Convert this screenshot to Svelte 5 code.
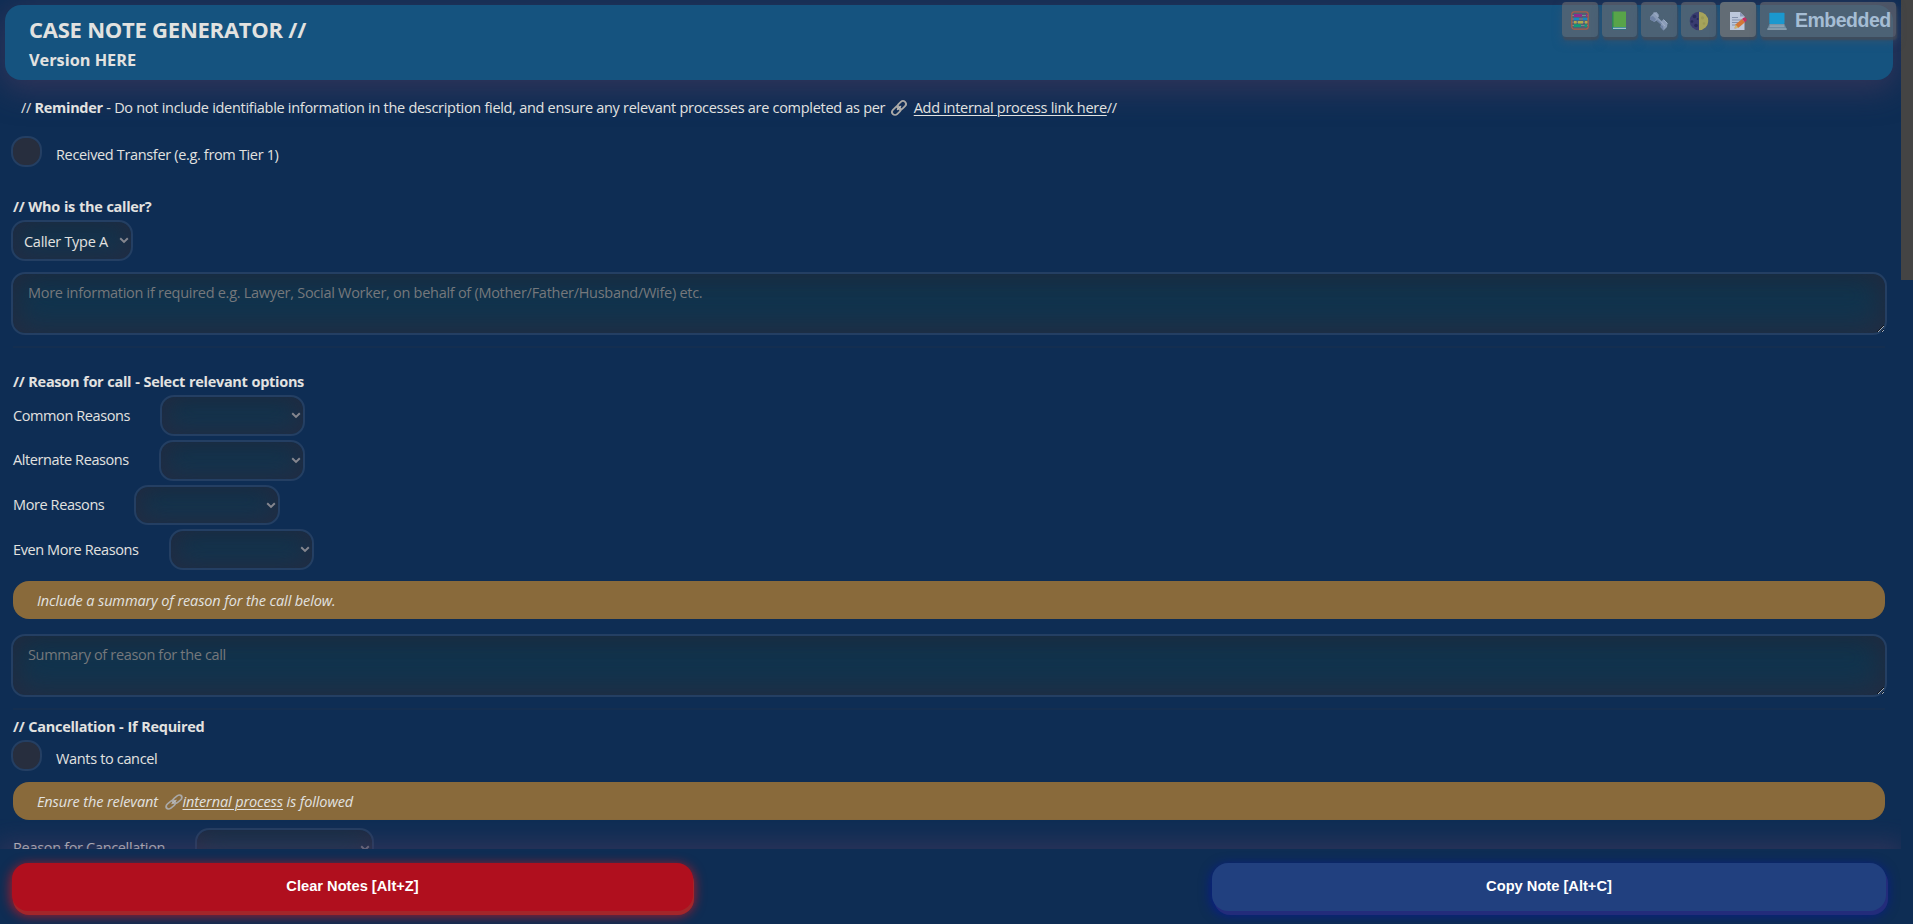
<script>
  const reasons = [
    { label: 'Common Reasons', width: 145, height: 41, cls: 'r1' },
    { label: 'Alternate Reasons', width: 146, height: 41, cls: 'r2' },
    { label: 'More Reasons', width: 146, height: 40, cls: 'r3' },
    { label: 'Even More Reasons', width: 145, height: 41, cls: 'r4' }
  ];
</script>

{#snippet chevron()}
  <svg class="chev" width="10" height="7" viewBox="0 0 10 7"><path d="M1.2 1.3 5 4.9 8.8 1.3" fill="none" stroke="#85868f" stroke-width="2" /></svg>
{/snippet}

{#snippet link()}
  <svg class="link" width="16" height="16" viewBox="0 0 16 16" fill="none" stroke-linecap="round">
    <g transform="rotate(-45 8 8)">
      <rect x="-0.6" y="5" width="9.6" height="6" rx="3" stroke="#aaa9a7" stroke-width="1.8" />
      <rect x="7" y="5" width="9.6" height="6" rx="3" stroke="#aaa9a7" stroke-width="1.8" />
      <path d="M5.6 8h5" stroke="#c0bfbd" stroke-width="1" />
    </g>
  </svg>
{/snippet}

<div class="app">
  <div class="page">
    <div class="scroll">
      <header>
        <h1>CASE NOTE GENERATOR //</h1>
        <h2>Version HERE</h2>
      </header>

      <main>
        <p class="reminder">// <b>Reminder</b> - Do not include identifiable information in the description field, and ensure any relevant processes are completed as per {@render link()}<a href="#top">Add internal process link here</a>//</p>

        <label class="check first"><input type="checkbox" /><span>Received Transfer (e.g. from Tier 1)</span></label>

        <h3 class="caller">// Who is the caller?</h3>
        <div class="select type">
          <select><option>Caller Type A</option></select>
          {@render chevron()}
        </div>
        <textarea class="t1" placeholder="More information if required e.g. Lawyer, Social Worker, on behalf of (Mother/Father/Husband/Wife) etc."></textarea>
        <hr />

        <h3 class="reason">// Reason for call - Select relevant options</h3>
        {#each reasons as r}
          <div class="row {r.cls}">
            <span>{r.label}</span>
            <div class="select" style="width:{r.width}px;height:{r.height}px">
              <select></select>
              {@render chevron()}
            </div>
          </div>
        {/each}

        <p class="note n1">Include a summary of reason for the call below.</p>
        <textarea class="t2" placeholder="Summary of reason for the call"></textarea>
        <hr />

        <h3 class="cancel">// Cancellation - If Required</h3>
        <label class="check second"><input type="checkbox" /><span>Wants to cancel</span></label>
        <p class="note n2">Ensure the relevant {@render link()}<a href="#top">internal process</a> is followed</p>
        <div class="row why">
          <span>Reason for Cancellation</span>
          <div class="select" style="width:179px;height:41px">
            <select></select>
            {@render chevron()}
          </div>
        </div>
      </main>
    </div>

    <footer>
      <button class="clear">Clear Notes [Alt+Z]</button>
      <button class="copy">Copy Note [Alt+C]</button>
    </footer>
  </div>

  <div class="track"><div class="thumb"></div></div>

  <nav class="tools">
    <button aria-label="Abacus">
      <svg width="18" height="19" viewBox="0 0 18 19">
        <path d="M1 4.5h16M1 8h16M1 11.2h16M1 14.5h16" stroke="#7b8590" stroke-width="1" />
        <path d="M3 4.5h8M15 4.5h1.5" stroke="#902b8c" stroke-width="2.8" />
        <path d="M3 8h5M12 8h4" stroke="#1486c4" stroke-width="2.6" />
        <path d="M3 11.2h2.6M7 11.2h5M14 11.2h2.5" stroke="#b3aa4a" stroke-width="2.4" />
        <path d="M3 14.6h7M13.5 14.6h2.5" stroke="#109a78" stroke-width="2.8" />
        <rect x="0.8" y="0.9" width="16.4" height="17.2" rx="2.4" fill="none" stroke="#a85e48" stroke-width="1.2" />
      </svg>
    </button>
    <button aria-label="Book">
      <svg width="18" height="19" viewBox="0 0 18 19">
        <path d="M2 2Q2 .5 3.500.5H16V16H2z" fill="#58a449" />
        <path d="M2 2Q2 .5 3.500.5V16.500L2 17z" fill="#2f8656" />
        <path d="M2.500 16H16v2.500H3.500Q2 18.500 2 17z" fill="#177d85" />
        <path d="M3 17.300H16" stroke="#b4c6cf" stroke-width="1.200" />
      </svg>
    </button>
    <button aria-label="Bolt">
      <svg width="20" height="20" viewBox="0 0 20 20">
        <path d="M1 6 5 1.500 7.500 1 10 4 9 6.500 12.500 10l2-1.500 4 4-.5 3.500-3.500 3.500-3-3.500.5-2.500-4.500-4-2 1.500L1 8.500z" fill="#8a9cb8" />
        <path d="M1 6 4 5l3 3-1.500 3L1 8.500zM7.500 9.500l4.500 4 .8-1-4.500-4zM12 14l2 1 .8 4.500-3.300-3.500z" fill="#6e82a5" />
        <path d="M14.500 8.500 18.500 12.500M12.500 11l3.500 4M5 1.500 9.500 6" stroke="#a3b2ca" stroke-width=".9" />
      </svg>
    </button>
    <button aria-label="Contrast">
      <svg width="20" height="20" viewBox="0 0 20 20">
        <circle cx="10" cy="10" r="9.300" fill="#393c70" />
        <path d="M10 .7a9.300 9.300 0 0 1 0 18.600z" fill="#a6a45b" />
        <g fill="#252b59"><circle cx="5.500" cy="5.500" r="1.800" /><circle cx="3" cy="10.500" r="1.300" /><circle cx="7" cy="14.500" r="1.800" /><circle cx="8.600" cy="8" r="1" /></g>
        <g fill="#999855"><circle cx="13.500" cy="6.800" r="1.600" /><circle cx="15" cy="12.500" r="1.300" /></g>
      </svg>
    </button>
    <button class="memo" aria-label="Memo">
      <svg width="18" height="20" viewBox="0 0 18 20">
        <path d="M1 1h10l4.500 4.500V19H1z" fill="#bdc8dc" />
        <path d="M11 1v4.500h4.500z" fill="#8b98b8" />
        <path d="M3 6.500h6M3 9h10M3 11.500h8M3 14h5" stroke="#8391ac" stroke-width="1" />
        <path d="M5.500 17.500 6.500 13.500 13 8l3 3.300-6.500 5.500z" fill="#d27638" />
        <path d="m13 8 1.500-1.200q1.500-.8 2.700.6t0 2.700L16 11.300z" fill="#c42f62" />
        <path d="M5.500 17.500 6.500 13.500l3 3.300z" fill="#c9b878" />
      </svg>
    </button>
    <button class="emb">
      <svg width="20" height="20" viewBox="0 0 20 20">
        <rect x="2.300" y="1.800" width="15.200" height="11.200" rx=".8" fill="#1b98ce" />
        <path d="M2.300 13h15.200l2 5H.5z" fill="#6f8ba0" />
        <path d="M3 14.200h14M2.700 15.400h14.600" stroke="#9ab0bf" stroke-width=".7" />
        <path d="M.3 17.500h19.400v1.300H.3z" fill="#98acba" />
      </svg>
      <span>Embedded</span>
    </button>
  </nav>
</div>

<style>
  :global(body) { margin: 0; background: #0e2d54; overflow: hidden; }
  .app {
    position: relative;
    display: grid;
    grid-template-columns: 1901px 12px;
    width: 1913px;
    height: 924px;
    overflow: hidden;
    background: #0e2d54;
    color: #e2e2e0;
    font: 14.5px "Open Sans", sans-serif;
    letter-spacing: -0.29px;
  }
  .page { display: flex; flex-direction: column; height: 924px; min-width: 0; }
  .scroll { height: 849px; overflow: hidden; }
  header {
    box-sizing: border-box;
    height: 75px;
    margin: 5px 8px 0 5px;
    padding: 9px 24px 0;
    border-radius: 16px;
    background: #15537f;
    box-shadow: 0 7px 30px 4px rgba(66, 56, 92, 0.66);
  }
  h1, h2, h3, p { margin: 0; white-space: nowrap; }
  h1 { font-size: 22px; line-height: 30px; letter-spacing: -0.24px; }
  h2 { font-size: 16.3px; line-height: 32px; letter-spacing: 0; }
  main { display: flex; flex-direction: column; align-items: flex-start; padding: 17px 14px 0 13px; }
  p, h3, .row span, .check span { line-height: 22px; }
  h3 { font-size: 14.5px; height: 20px; letter-spacing: -0.3px; word-spacing: 0.5px; }
  a { color: inherit; text-decoration: underline; text-underline-offset: 2px; text-decoration-thickness: 1px; }
  .reminder { padding-left: 8px; height: 20px; }
  .reminder b { letter-spacing: -0.3px; }
  .link { vertical-align: -3px; margin: 0 7px 0 2px; overflow: visible; }
  .check { display: flex; height: 31px; margin-left: -2px; }
  .check input {
    appearance: none;
    box-sizing: border-box;
    width: 31px;
    height: 31px;
    margin: 0 14px 0 0;
    border: 2px solid #243f63;
    border-radius: 14px;
    background: #272e3e;
  }
  .check span { margin-top: 8px; white-space: nowrap; letter-spacing: -0.34px; }
  .first { margin-top: 19px; }
  .caller { margin-top: 29px; }
  .select { display: grid; grid-template: 100% / 100%; align-items: center; }
  .select > * { grid-area: 1 / 1; }
  select, textarea {
    box-sizing: border-box;
    border: 2px solid #243f63;
    background: #10354f;
    color: #e2e2e0;
    font: 14.5px "Open Sans", sans-serif;
    letter-spacing: -0.28px;
    margin: 0;
    outline: none;
  }
  select {
    appearance: none;
    width: 100%;
    height: 100%;
    border-radius: 14px;
    padding: 1px 10px 0 11px;
    box-shadow: inset 0 -5px 28px 3px rgba(42, 42, 66, 0.66), inset 0 6px 20px rgba(22, 40, 60, 0.65);
  }
  .chev { justify-self: end; margin-right: 4px; pointer-events: none; }
  .type { width: 122px; height: 41px; margin: 4px 0 0 -2px; }
  textarea {
    width: 1876px;
    height: 63px;
    margin-left: -2px;
    padding: 9px 15px 7px;
    border-radius: 14px;
    line-height: 20px;
    box-shadow: inset 0 -8px 34px rgba(44, 42, 64, 0.66), inset 0 8px 24px rgba(24, 40, 58, 0.7);
  }
  textarea::placeholder { color: #75787c; opacity: 1; }
  .t1 { margin-top: 11px; }
  .t2 { margin-top: 15px; letter-spacing: -0.34px; }
  hr { width: 1872px; height: 2px; margin: 11px 0 0; border: 0; background: #142e50; }
  .reason { margin-top: 23px; }
  .row { display: flex; }
  .row span { white-space: nowrap; margin-top: 9px; height: 20px; letter-spacing: -0.4px; }
  .r1 span, .r4 span { margin-top: 10px; }
  .r1 span { width: 147px; }
  .r2 span { width: 146px; }
  .r3 span { width: 121px; }
  .r4 span { width: 156px; }
  .r1, .r2, .r3, .r4 { margin-top: 4px; }
  .note {
    box-sizing: border-box;
    width: 1872px;
    height: 38px;
    padding-left: 24px;
    border-radius: 16px;
    background: #896a3b;
    font-style: italic;
    letter-spacing: -0.12px;
    line-height: 39px;
  }
  .note .link { margin: 0 1px 0 4px; transform: skewX(-12deg); }
  .n1 { margin-top: 11px; }
  .cancel { margin-top: 6px; }
  .second { margin-top: 4px; }
  .n2 { margin-top: 11px; }
  .why { margin-top: 8px; }
  .why span { width: 182px; letter-spacing: -0.33px; }
  footer {
    position: relative;
    box-sizing: border-box;
    display: flex;
    justify-content: space-between;
    height: 75px;
    padding: 14px 15px 13px 12px;
    background: #0e2d54;
    box-shadow: 0 -4px 24px 2px rgba(66, 56, 92, 0.66);
    clip-path: inset(-30px 0 0 0);
  }
  footer button {
    height: 48px;
    padding: 0 0 3px;
    border: 0;
    border-radius: 16px;
    color: #fff;
    font: 700 14.67px "Liberation Sans", Arial, sans-serif;
  }
  .clear { width: 681px; background: #b00f1e; box-shadow: 1px 4px 0 #a3262a, 0 3px 12px 1px rgba(225, 20, 25, 0.8); }
  .copy { width: 674px; background: #21407f; box-shadow: 2px 4px 0 #232c7b, 0 3px 12px 1px rgba(5, 22, 165, 0.7); }
  .track { height: 924px; }
  .thumb { height: 280px; background: #444; }
  .tools { position: absolute; top: 2px; left: 1562px; display: flex; gap: 4px; }
  .tools button {
    display: flex;
    align-items: center;
    justify-content: center;
    width: 35.6px;
    height: 35px;
    padding: 2px 0 0;
    border: 0;
    border-radius: 4px;
    background: rgba(104, 107, 112, 0.66);
    box-shadow: 1px 3px 2px rgba(70, 73, 84, 0.75), 0 5px 10px rgba(58, 84, 112, 0.7);
  }
  .tools .memo { background: #626c75; }
  .tools .emb {
    width: 136px;
    justify-content: flex-start;
    padding-left: 7px;
    color: #a5bdd4;
    font: 700 19.5px "Liberation Sans", Arial, sans-serif;
    letter-spacing: -0.5px;
    gap: 8px;
  }
</style>
